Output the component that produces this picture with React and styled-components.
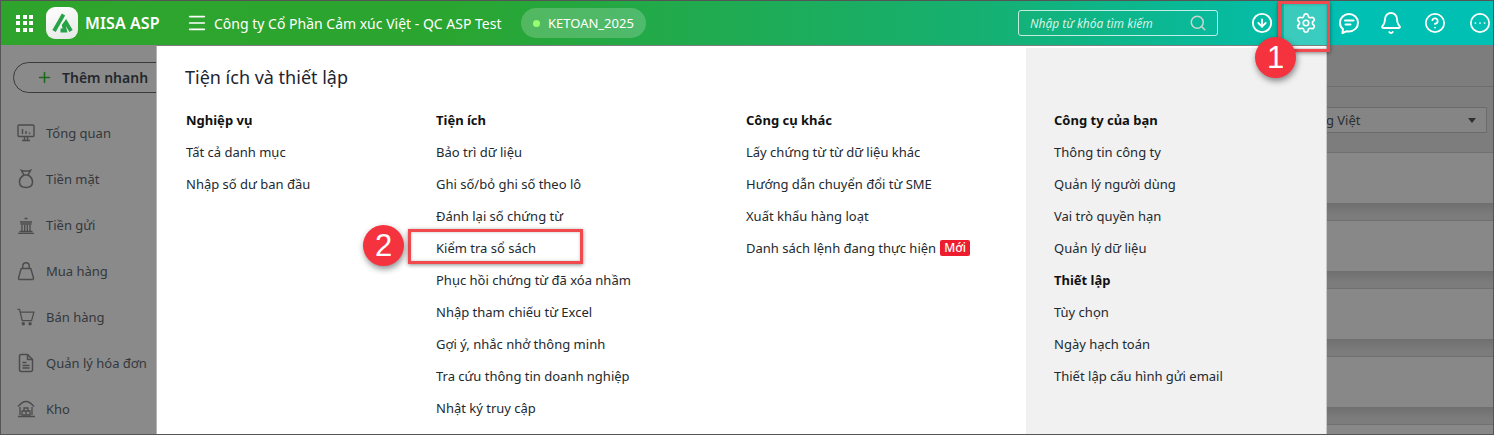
import React from "react";
import styled, { createGlobalStyle } from "styled-components";
import {
  Settings,
  CircleArrowDown,
  Bell,
  CircleHelp,
  CircleEllipsis,
  Search,
  Menu,
  Plus,
} from "lucide-react";

const GlobalStyle = createGlobalStyle`
  html, body {
    margin: 0;
    padding: 0;
    background: #848484;
    font-family: "Noto Sans", "Open Sans", sans-serif;
    font-size: 13px;
    overflow: hidden;
  }
  * { box-sizing: border-box; }
`;

const Page = styled.div`
  position: relative;
  width: 1494px;
  height: 435px;
  overflow: hidden;
  border: 1px solid #555;
  background: #868686;
`;

const TopBar = styled.header`
  display: flex;
  align-items: center;
  height: 44px;
  padding-left: 15px;
  color: #fff;
  background: linear-gradient(90deg, #2fa42c 0%, #2aa530 30%, #16b070 65%, #00bfb3 90%);
`;

const AppsGrid = styled.div`
  display: grid;
  grid-template-columns: repeat(3, 4px);
  grid-auto-rows: 4px;
  gap: 2.5px;
  width: 17px;
  i { background: #fff; display: block; }
`;

const LogoTile = styled.div`
  display: flex;
  align-items: center;
  justify-content: center;
  width: 32px;
  height: 32px;
  margin-left: 13px;
  border-radius: 9px;
  background: linear-gradient(160deg, #ffffff, #e4e8e4);
`;

const LogoText = styled.div`
  margin-left: 7px;
  font-size: 16px;
  font-weight: 600;
  letter-spacing: 0.1px;
  width: 101px;
  white-space: nowrap;
`;

const CompanyName = styled.div`
  margin-left: 6px;
  font-size: 14px;
  white-space: nowrap;
  width: 290px;
`;

const DbPill = styled.div`
  display: flex;
  align-items: center;
  gap: 8px;
  width: 125px;
  height: 30px;
  margin-left: 17px;
  padding-left: 12px;
  border-radius: 15px;
  font-size: 13px;
  background: rgba(255, 255, 255, 0.2);
  &::before {
    content: "";
    width: 7px;
    height: 7px;
    border-radius: 50%;
    background: #95ff6e;
  }
`;

const SearchBox = styled.div`
  display: flex;
  align-items: center;
  justify-content: space-between;
  width: 200px;
  height: 26px;
  margin-left: auto;
  padding: 0 10px 0 11px;
  border: 1px solid rgba(255, 255, 255, 0.75);
  border-radius: 3px;
  font-style: italic;
  font-size: 12px;
  color: #d4f3e6;
`;

const IconRow = styled.div`
  display: flex;
  align-items: center;
  height: 44px;
  margin-left: 22px;
  width: 253px;
`;

const TopIcon = styled.div`
  display: flex;
  align-items: center;
  justify-content: center;
  flex: 0 0 ${(p) => p.$w}px;
  height: 44px;
  background: ${(p) => (p.$active ? "rgba(255,255,255,0.22)" : "transparent")};
`;

const Body = styled.div`
  display: grid;
  grid-template-columns: 156px 1fr;
  height: 389px;
`;

const Sidebar = styled.aside`
  padding: 17px 12px 0;
  background: #8a8a8a;
  color: #33373b;
`;

const QuickAdd = styled.div`
  display: flex;
  align-items: center;
  gap: 9px;
  width: 160px;
  height: 31px;
  padding-left: 22px;
  border: 1px solid #3b3b3b;
  border-radius: 16px;
  font-size: 14px;
  font-weight: 600;
  white-space: nowrap;
  color: #23282c;
  svg { color: #1e6a1c; }
`;

const SideList = styled.div`
  display: flex;
  flex-direction: column;
  gap: 22px;
  margin-top: 28px;
`;

const SideItem = styled.div`
  display: flex;
  align-items: center;
  gap: 11px;
  height: 24px;
  padding-left: 4px;
  font-size: 13px;
  white-space: nowrap;
  color: #34383c;
  svg { flex: 0 0 18px; color: #4c4c4c; }
`;

const Behind = styled.div`
  display: flex;
  flex-direction: column;
  align-items: flex-end;
  background: #7d7d7d;
`;

const BehindHead = styled.div`
  width: 100%;
  height: 42px;
  flex: none;
  border-bottom: 1px solid #6e6e6e;
`;

const LangSelect = styled.div`
  display: flex;
  flex: none;
  align-items: center;
  justify-content: space-between;
  width: 330px;
  height: 26px;
  margin: 20px 6px 19px 0;
  padding: 0 10px 0 0;
  border: 1px solid #6b6b6b;
  background: #858585;
  font-size: 13px;
  color: #2b2f33;
  &::after {
    content: "";
    border-left: 4px solid transparent;
    border-right: 4px solid transparent;
    border-top: 5px solid #2e2e2e;
  }
  span { margin-left: 142px; }
`;

const Card = styled.div`
  width: 100%;
  height: 51px;
  flex: none;
  background: #888;
  border-top: 1px solid #707070;
`;

const Gap = styled.div`
  width: 100%;
  height: 17px;
  flex: none;
  background: linear-gradient(#6f6f6f, #7c7c7c 70%);
`;

const MegaMenu = styled.div`
  position: absolute;
  top: 45px;
  left: 156px;
  width: 1169px;
  height: 389px;
  display: grid;
  grid-template-columns: 869px 300px;
  background: #fff;
  color: #1f2a33;
  box-shadow: 1px 0 0 #c8c8c8, -1px 0 0 #b4b4b4;
`;

const MenuMain = styled.div`
  padding: 19px 0 0 28px;
`;

const MenuTitle = styled.div`
  font-size: 18px;
  line-height: 24px;
  color: #1c2530;
`;

const Columns = styled.div`
  display: grid;
  grid-template-columns: 250px 310px 1fr;
  margin-top: 15px;
  padding-left: 1px;
`;

const MenuColumn = styled.div`
  display: flex;
  flex-direction: column;
`;

const MenuHead = styled.div`
  height: 32px;
  line-height: 32px;
  font-size: 13px;
  font-weight: 700;
  color: #111;
`;

const MenuLink = styled.div`
  display: flex;
  align-items: center;
  gap: 4px;
  height: 32px;
  font-size: 13px;
  white-space: nowrap;
  color: #22292f;
`;

const NewTag = styled.span`
  padding: 0 4px;
  height: 16px;
  line-height: 16px;
  border-radius: 2px;
  font-size: 12px;
  font-weight: 500;
  color: #fff;
  background: #ed1c2e;
`;

const MenuAside = styled.div`
  padding: 56px 0 0 28px;
  background: #f1f1f1;
  margin-top: 2px;
`;

const RedBox = styled.div`
  position: absolute;
  border: 3px solid #f04a4f;
  box-shadow: 0 1px 4px rgba(0, 0, 0, 0.45), inset 0 0 3px rgba(0, 0, 0, 0.25);
`;

const Badge = styled.div`
  position: absolute;
  display: flex;
  align-items: center;
  justify-content: center;
  width: 41px;
  height: 41px;
  border-radius: 50%;
  font-family: "Liberation Sans", Arial, sans-serif;
  font-size: 31px;
  color: #fff;
  background: #f5333f;
  box-shadow: 1px 3px 6px rgba(0, 0, 0, 0.45);
`;

const BagIcon = () => (
  <svg width="18" height="20" viewBox="0 0 18 20" fill="none" stroke="currentColor" strokeWidth="1.5">
    <path d="M4.500 1.500c2 .8 7 .8 9 0L11 6H7z" />
    <path d="M7 6C3.500 8 2.500 10.500 2.500 13c0 3.500 2.500 5.500 6.500 5.500s6.500-2 6.500-5.500c0-2.500-1-5-4.500-7" />
  </svg>
);

const MonitorIcon = () => (
  <svg width="18" height="18" viewBox="0 0 18 18" fill="none" stroke="currentColor" strokeWidth="1.4">
    <rect x="1" y="1" width="16" height="11.500" rx="1" />
    <path d="M5 16.500h8M7.500 13v3.500M10.500 13v3.500" />
    <path d="M5.500 10V5M9 10V7M12.500 10V8.500" />
  </svg>
);

const BankIcon = () => (
  <svg width="18" height="18" viewBox="0 0 18 18" fill="none" stroke="currentColor" strokeWidth="1.3">
    <path d="M7.500 2.500h3M3 6h12M3.500 8h11" />
    <path d="M5 9v6M7.700 9v6M10.300 9v6M13 9v6" />
    <path d="M2.500 15.500h13M1 17.300h16" />
  </svg>
);

const HandBagIcon = () => (
  <svg width="18" height="20" viewBox="0 0 18 20" fill="none" stroke="currentColor" strokeWidth="1.4" strokeLinejoin="round">
    <path d="M4.200 7.500h9.600l2.700 9.500c.2.800-.3 1.500-1.200 1.500H2.700c-.9 0-1.400-.7-1.200-1.500z" />
    <path d="M5.800 7.500V5a3.200 3.200 0 0 1 6.400 0v2.500" />
  </svg>
);

const CartIcon = () => (
  <svg width="20" height="20" viewBox="0 0 20 20" fill="none" stroke="currentColor" strokeWidth="1.4" strokeLinejoin="round">
    <path d="M.5 1.500h2.300l3 12.500h10.400l2.600-9.500H3.600" />
    <circle cx="7" cy="17.500" r="1.200" fill="currentColor" />
    <circle cx="14.500" cy="17.500" r="1.200" fill="currentColor" />
  </svg>
);

const InvoiceIcon = () => (
  <svg width="18" height="20" viewBox="0 0 18 20" fill="none" stroke="currentColor" strokeWidth="1.5" strokeLinejoin="round">
    <path d="M4 1.500h6.500L15.500 6.500V17a1.500 1.500 0 0 1-1.500 1.500H4A1.500 1.500 0 0 1 2.500 17V3A1.500 1.500 0 0 1 4 1.500z" />
    <path d="M10.500 1.500v5h5M5.500 9.500h4M5.500 12.500h7M5.500 15h7" />
  </svg>
);

const WarehouseIcon = () => (
  <svg width="18" height="18" viewBox="0 0 18 18" fill="none" stroke="currentColor" strokeWidth="1.3">
    <path d="M1 6.500C4 3 6.500 1.500 9 1.500s5 1.500 8 5" />
    <path d="M3 7v8M15 7v8M1 16.500h17" />
    <path d="M7 8h4v3H7zM5 11h4v4H5zM9 11h4v4H9z" />
  </svg>
);

const ChatIcon = () => (
  <svg width="22" height="22" viewBox="0 0 22 22" fill="none" stroke="currentColor" strokeWidth="2" strokeLinecap="round" strokeLinejoin="round">
    <path d="M11 2c5 0 9 3.800 9 8.700s-4 8.700-9 8.700c-.8 0-1.500 0-2.200-.2L4.500 21l.4-3.900C3 15.500 2 13.300 2 10.700 2 5.800 6 2 11 2z" />
    <path d="M7 8.500h8.500M7.500 12.500h5" />
  </svg>
);

const LogoMark = () => (
  <svg width="22" height="20" viewBox="0 0 22 20" fill="none" stroke="#27a247" strokeWidth="3.800" strokeLinejoin="miter">
    <path d="M12.500 1.500 3 18" />
    <path d="M9.500 17.500h4.500L12.800 12.500 15 9.500 20 18" />
  </svg>
);

const columnOne = ["Tất cả danh mục", "Nhập số dư ban đầu"];
const columnTwo = [
  "Bảo trì dữ liệu",
  "Ghi số/bỏ ghi số theo lô",
  "Đánh lại số chứng từ",
  "Kiểm tra sổ sách",
  "Phục hồi chứng từ đã xóa nhầm",
  "Nhập tham chiếu từ Excel",
  "Gợi ý, nhắc nhở thông minh",
  "Tra cứu thông tin doanh nghiệp",
  "Nhật ký truy cập",
];
const columnThree = [
  "Lấy chứng từ từ dữ liệu khác",
  "Hướng dẫn chuyển đổi từ SME",
  "Xuất khẩu hàng loạt",
];
const companyLinks = [
  "Thông tin công ty",
  "Quản lý người dùng",
  "Vai trò quyền hạn",
  "Quản lý dữ liệu",
];
const settingLinks = ["Tùy chọn", "Ngày hạch toán", "Thiết lập cấu hình gửi email"];

const sideItems = [
  ["Tổng quan", <MonitorIcon key="m" />],
  ["Tiền mặt", <BagIcon key="b" />],
  ["Tiền gửi", <BankIcon key="k" />],
  ["Mua hàng", <HandBagIcon key="s" />],
  ["Bán hàng", <CartIcon key="c" />],
  ["Quản lý hóa đơn", <InvoiceIcon key="f" />],
  ["Kho", <WarehouseIcon key="w" />],
];

export default function App() {
  return (
    <Page>
      <GlobalStyle />
      <TopBar>
        <AppsGrid>
          {Array.from({ length: 9 }).map((_, i) => (
            <i key={i} />
          ))}
        </AppsGrid>
        <LogoTile>
          <LogoMark />
        </LogoTile>
        <LogoText>MISA ASP</LogoText>
        <Menu size={22} strokeWidth={1.8} />
        <CompanyName>Công ty Cổ Phần Cảm xúc Việt - QC ASP Test</CompanyName>
        <DbPill>KETOAN_2025</DbPill>
        <SearchBox>
          Nhập từ khóa tìm kiếm
          <Search size={18} color="#c9d6cf" />
        </SearchBox>
        <IconRow>
          <TopIcon $w={44}><CircleArrowDown size={22} strokeWidth={2} /></TopIcon>
          <TopIcon $w={43} $active><Settings size={22} strokeWidth={1.8} /></TopIcon>
          <TopIcon $w={43}><ChatIcon /></TopIcon>
          <TopIcon $w={41}><Bell size={24} strokeWidth={1.8} /></TopIcon>
          <TopIcon $w={47}><CircleHelp size={22} strokeWidth={1.9} /></TopIcon>
          <TopIcon $w={44}><CircleEllipsis size={22} strokeWidth={1.9} /></TopIcon>
        </IconRow>
      </TopBar>
      <Body>
        <Sidebar>
          <QuickAdd>
            <Plus size={17} strokeWidth={2.2} />
            Thêm nhanh
          </QuickAdd>
          <SideList>
            {sideItems.map(([label, icon]) => (
              <SideItem key={label}>
                {icon}
                {label}
              </SideItem>
            ))}
          </SideList>
        </Sidebar>
        <Behind>
          <BehindHead />
          <LangSelect><span>Tiếng Việt</span></LangSelect>
          {[0, 1, 2, 3, 4].map((n) => (
            <React.Fragment key={n}>
              <Card />
              <Gap />
            </React.Fragment>
          ))}
        </Behind>
      </Body>
      <MegaMenu>
        <MenuMain>
          <MenuTitle>Tiện ích và thiết lập</MenuTitle>
          <Columns>
            <MenuColumn>
              <MenuHead>Nghiệp vụ</MenuHead>
              {columnOne.map((t) => <MenuLink key={t}>{t}</MenuLink>)}
            </MenuColumn>
            <MenuColumn>
              <MenuHead>Tiện ích</MenuHead>
              {columnTwo.map((t) => <MenuLink key={t}>{t}</MenuLink>)}
            </MenuColumn>
            <MenuColumn>
              <MenuHead>Công cụ khác</MenuHead>
              {columnThree.map((t) => <MenuLink key={t}>{t}</MenuLink>)}
              <MenuLink>Danh sách lệnh đang thực hiện <NewTag>Mới</NewTag></MenuLink>
            </MenuColumn>
          </Columns>
        </MenuMain>
        <MenuAside>
          <MenuColumn>
            <MenuHead>Công ty của bạn</MenuHead>
            {companyLinks.map((t) => <MenuLink key={t}>{t}</MenuLink>)}
            <MenuHead>Thiết lập</MenuHead>
            {settingLinks.map((t) => <MenuLink key={t}>{t}</MenuLink>)}
          </MenuColumn>
        </MenuAside>
      </MegaMenu>
      <RedBox style={{ left: 1277, top: 0, width: 52, height: 51 }} />
      <Badge style={{ left: 1254, top: 36 }}>1</Badge>
      <RedBox style={{ left: 407, top: 228, width: 175, height: 35 }} />
      <Badge style={{ left: 362, top: 224 }}>2</Badge>
    </Page>
  );
}
